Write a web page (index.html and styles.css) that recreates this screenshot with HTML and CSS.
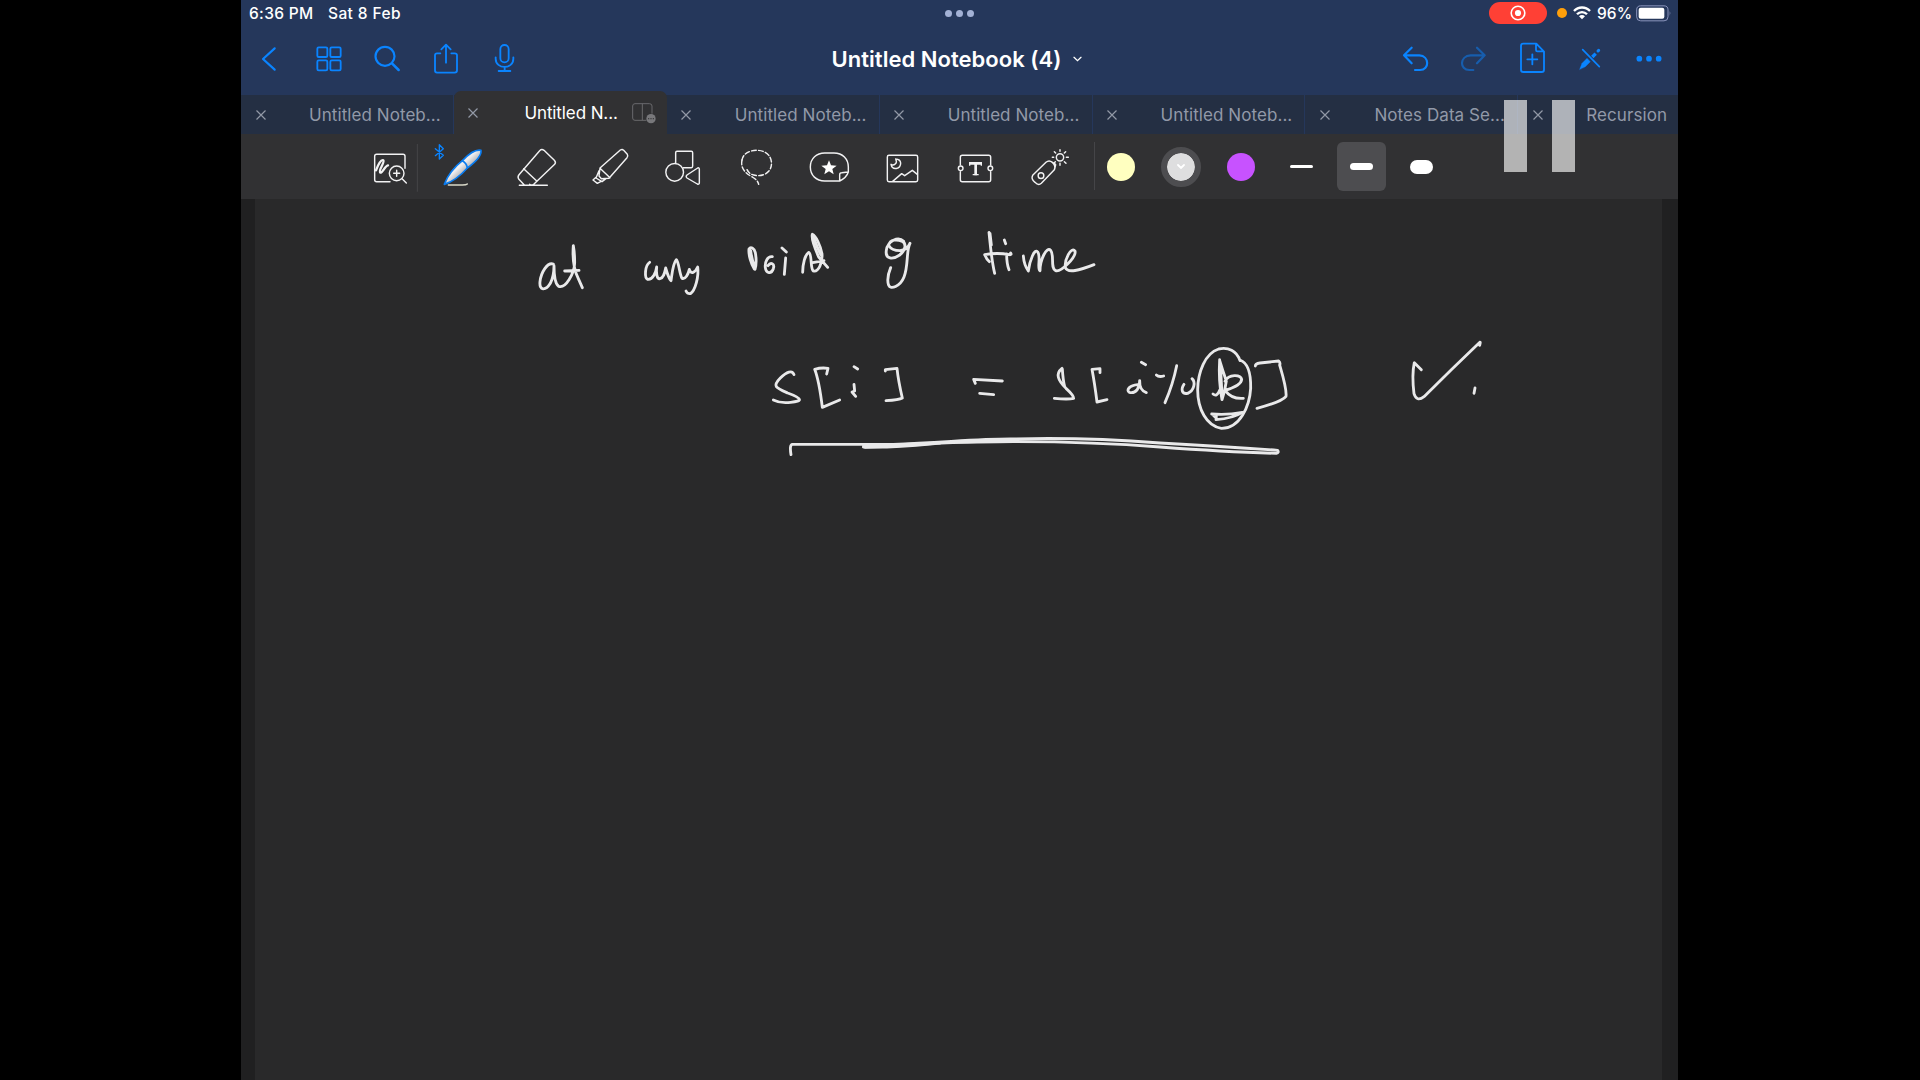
FILE: index.html
```html
<!DOCTYPE html>
<html lang="en">
<head>
<meta charset="utf-8">
<title>Untitled Notebook (4)</title>
<link rel="stylesheet" href="styles.css">
</head>
<body>
<main class="tablet">
  <header class="header">
    <div class="status">
      <span class="status-time">6:36 PM</span>
      <span class="status-date">Sat 8 Feb</span>
      <span class="status-dots"><i></i><i></i><i></i></span>
      <span class="recording">
        <svg width="16" height="16" viewBox="0 0 16 16"><circle cx="8" cy="8" r="6.8" fill="none" stroke="#fff" stroke-width="1.6"/><circle cx="8" cy="8" r="3.1" fill="#fff"/></svg>
      </span>
      <span class="mic-dot"></span>
      <svg class="wifi" width="18" height="14" viewBox="0 0 54 42"><g fill="none" stroke="#fff" stroke-width="7"><path d="M3 15C16 1 38 1 51 15"/><path d="M12 25C20 16 34 16 42 25"/></g><path d="M27 40L18 31C23 26 31 26 36 31Z" fill="#fff"/></svg>
      <span class="battery-text">96%</span>
      <svg class="battery" width="36" height="17" viewBox="0 0 108 51"><rect x="2" y="2.500" width="94" height="45" rx="12" fill="none" stroke="#8b95bd" stroke-width="3"/><rect x="8" y="8.500" width="77" height="33" rx="6" fill="#fff"/><path d="M101 18Q106 25 101 33Z" fill="#8b95bd"/></svg>
    </div>
    <nav class="nav">
      <div class="nav-group">
        <svg class="nav-icon" viewBox="18 66 174 219"><path d="M119 145L84 177L119 209"/></svg>
        <svg class="nav-icon" viewBox="192 66 174 219"><g stroke-width="5.500"><rect x="247" y="142" width="30" height="29" rx="4"/><rect x="286" y="142" width="31" height="29" rx="4"/><rect x="247" y="181" width="30" height="30" rx="4"/><rect x="286" y="181" width="31" height="30" rx="4"/></g></svg>
        <svg class="nav-icon" viewBox="366 66 174 219"><circle cx="450" cy="169" r="28.500"/><path d="M471 190L491 210" stroke-width="7.500"/></svg>
        <svg class="nav-icon" viewBox="540 66 174 219"><g stroke-width="5.500"><path d="M616 160H606Q600 160 600 166V211Q600 218 606 218H659Q666 218 666 211V166Q666 160 659 160H649M633 188V135M619 148L633 134L647 148"/></g></svg>
        <svg class="nav-icon" viewBox="714 66 174 219"><g stroke-width="5.500"><rect x="796" y="135" width="25" height="52" rx="12.500"/><path d="M782 172V176C782 209 835 209 835 176V172M809 202V212M791 213H826"/></g></svg>
      </div>
      <h1 class="title">Untitled Notebook (4)<svg width="9" height="6" viewBox="0 0 27 18"><path d="M3 4L13.500 14L24 4" fill="none" stroke="#fff" stroke-width="4" stroke-linecap="round"/></svg></h1>
      <div class="nav-group">
        <svg class="nav-icon" viewBox="564 66 174 219"><path d="M635 143L612 166L635 190M613 166H658C689 168 689 210 660 210H645"/></svg>
        <svg class="nav-icon dim" viewBox="18 66 174 219"><path d="M111 143L134 166L111 190M133 166H92C58 168 58 210 88 210H100"/></svg>
        <svg class="nav-icon" viewBox="192 66 174 219"><g stroke-width="5.500"><path d="M250 131H289L312 155V209Q312 216 305 216H250Q243 216 243 209V138Q243 131 250 131ZM288 132V150Q288 154 292 154H311M277 163V193M262 178H292"/></g></svg>
        <svg class="nav-icon" viewBox="366 66 174 219"><path d="M428 149L478 200" stroke-width="5"/><path d="M419 208L426 190L441 175L451 185L436 200Z" fill="#0a84ff" stroke-width="1"/><path d="M457 171L467 161" stroke-width="10" stroke-linecap="butt"/><path d="M474 153L476 151" stroke-width="9"/></svg>
        <svg class="nav-icon" viewBox="540 66 174 219"><g fill="#0a84ff" stroke="none"><circle cx="598" cy="176" r="8.500"/><circle cx="627" cy="176" r="8.500"/><circle cx="656" cy="176" r="8.500"/></g></svg>
      </div>
    </nav>
  </header>

  <div class="tabs">
    <div class="tab"><svg class="close" viewBox="0 0 10 10"><path d="M.5 .5L9.500 9.500M9.500 .5L.5 9.500"/></svg><span>Untitled Noteb...</span></div>
    <div class="tab active"><svg class="close" viewBox="0 0 10 10"><path d="M.5 .5L9.500 9.500M9.500 .5L.5 9.500"/></svg><span>Untitled N...</span>
      <svg class="split" width="24" height="21" viewBox="0 0 72 63"><g fill="none" stroke="#69696c" stroke-width="3"><path d="M43 52H9Q2 52 2 45V9Q2 2 9 2H52Q60 2 60 9V32M31 2V52"/></g><circle cx="57" cy="47" r="14" fill="#78787b"/><g fill="#313133"><circle cx="50" cy="47" r="2"/><circle cx="57" cy="47" r="2"/><circle cx="64" cy="47" r="2"/></g></svg></div>
    <div class="tab"><svg class="close" viewBox="0 0 10 10"><path d="M.5 .5L9.500 9.500M9.500 .5L.5 9.500"/></svg><span>Untitled Noteb...</span></div>
    <div class="tab"><svg class="close" viewBox="0 0 10 10"><path d="M.5 .5L9.500 9.500M9.500 .5L.5 9.500"/></svg><span>Untitled Noteb...</span></div>
    <div class="tab"><svg class="close" viewBox="0 0 10 10"><path d="M.5 .5L9.500 9.500M9.500 .5L.5 9.500"/></svg><span>Untitled Noteb...</span></div>
    <div class="tab"><svg class="close" viewBox="0 0 10 10"><path d="M.5 .5L9.500 9.500M9.500 .5L.5 9.500"/></svg><span class="wide">Notes Data Se...</span></div>
    <div class="tab last"><svg class="close" viewBox="0 0 10 10"><path d="M.5 .5L9.500 9.500M9.500 .5L.5 9.500"/></svg><span>Recursion</span></div>
  </div>

  <div class="toolbar">
    <div class="tools">
      <svg class="tool" viewBox="354 402 219 195"><path d="M547 433V574" stroke="#454548" stroke-width="3"/><path d="M465 545H425Q419 545 419 539V469Q419 463 425 463H504Q510 463 510 469V505"/><path d="M423 511C430 492 438 478 445 481C451 485 428 514 436 518C443 519 449 498 459 496" stroke-width="7"/><circle cx="485" cy="520" r="22"/><path d="M485 511V529M476 520H494M502 537L514 549"/></svg>
      <svg class="tool" viewBox="573 402 219 195"><defs><linearGradient id="pen" x1="0" y1="0" x2="1" y2="1"><stop offset=".45" stop-color="#eeeef0"/><stop offset=".65" stop-color="#9b9b9f"/></linearGradient></defs><path d="M601 446L625 466L613 477V434L625 446L601 467" stroke="#0a84ff" stroke-width="4"/><path d="M640 555H682Q694 555 697 552" stroke="#d8d8c8"/><path d="M628 553C637 528 655 503 683 481C704 459 725 448 738 451C740 464 724 484 697 504C676 528 653 545 628 553Z" fill="url(#pen)" stroke="#0a7cf0" stroke-width="5"/><path d="M682 482Q695 489 697 503" stroke="#0a7cf0" stroke-width="5"/></svg>
      <svg class="tool" viewBox="792 402 219 195"><path d="M853 556H937M868 555L851 537Q847 530 852 524L914 452Q920 446 927 451L958 481Q964 487 959 493L897 552Q890 558 884 553M866 506L906 544"/></svg>
      <svg class="tool" viewBox="-54 402 219 195"><path d="M30 504L91 450Q97 446 101 451L112 463Q115 468 111 473L57 535L34 536L27 528ZM30 505L60 533M27 512L18 534L36 545L48 536M18 532L9 540L22 550L32 545"/></svg>
      <svg class="tool" viewBox="165 402 219 195"><path d="M257 489V458Q257 454 261 454H304Q308 454 308 458V498Q308 503 304 503H280"/><circle cx="254" cy="517" r="26.500"/><path d="M291 525L323 504Q328 502 328 508V548Q328 554 322 552L291 534Q286 530 291 525Z"/></svg>
      <svg class="tool" viewBox="384 402 219 195"><path d="M456 480C460 444 537 437 544 484C549 521 512 532 491 525Q474 521 470 505" stroke-dasharray="14 7"/><path d="M456 480C451 504 465 519 487 531Q504 541 506 553" stroke-dasharray="14 7"/></svg>
      <svg class="tool" viewBox="603 402 219 195"><path d="M749 543H704C679 543 661 526 661 501C661 475 680 459 704 459H732C758 459 775 477 775 501V516C771 529 761 537 749 543V524Q749 518 755 518L774 516"/><path d="M717 481L723 496L740 497L727 507L731 523L717 514L703 523L707 507L694 497L711 496Z" fill="#fff" stroke="none"/></svg>
      <svg class="tool" viewBox="822 402 219 195"><rect x="892" y="466" width="91" height="79" rx="5"/><path d="M908 544L935 521L944 527L967 511L982 523"/><path d="M917 477C924 490 911 499 903 493C907 512 932 508 932 489Q931 478 917 477"/></svg>
      <svg class="tool" viewBox="111 402 219 195"><path d="M181 495V472Q181 466 187 466H266Q272 466 272 472V495M181 515V539Q181 545 187 545H266Q272 545 272 539V515"/><circle cx="182" cy="505" r="7"/><circle cx="271" cy="505" r="7"/><path d="M207 490H246M227 490V526" stroke-width="8" stroke-linecap="butt"/><path d="M209 488V497M244 488V497M218 524H236" stroke-width="4" stroke-linecap="butt"/></svg>
      <svg class="tool" viewBox="330 402 219 195"><path d="M398 526L438 487Q447 479 457 487Q468 496 463 509L424 550Q415 558 405 547Q392 537 398 526ZM456 486L466 492M464 507L467 494"/><circle cx="423" cy="527" r="8.500"/><circle cx="480" cy="472" r="11"/><path d="M480 449V454M480 490V496M457 472H461M499 472H505M463 455L467 459M497 455L493 459M463 488L466 485M493 485L498 490"/></svg>
    </div>
    <div class="colors">
      <span class="swatch yellow"></span>
      <span class="swatch white"><svg width="8" height="6" viewBox="0 0 8 6"><path d="M1 1L4 4L7 1" fill="none" stroke="#fff" stroke-width="1.800" stroke-linecap="round"/></svg></span>
      <span class="swatch purple"></span>
    </div>
    <div class="widths">
      <span class="width"><i class="thin"></i></span>
      <span class="width selected"><i class="medium"></i></span>
      <span class="width"><i class="thick"></i></span>
    </div>
  </div>

  <section class="canvas">
    <div class="paper">
      <svg class="ink" width="1407" height="881" viewBox="255 199 1407 881">
        <g transform="translate(520 220) scale(.33333)">
          <path d="M100 132C82 126 63 157 60 185C57 213 77 213 91 190C99 174 102 155 102 137C102 160 104 190 116 199C137 207 163 160 164 129C164 105 162 88 160 77C157 115 162 150 175 176L187 203M134 153L177 151"/>
          <path d="M389 127C374 137 373 174 383 178C398 180 408 158 410 141C408 157 410 178 420 176C432 173 434 158 437 144C441 158 447 177 453 182C456 164 458 132 469 119C476 124 479 164 486 175C497 179 505 161 508 148C513 165 525 158 533 141C537 168 526 212 511 221Q502 222 498 213"/>
          <path d="M703 147C693 131 685 104 687 87C692 79 702 83 706 98C709 115 709 135 705 148M692 92Q695 118 704 140M757 110C743 108 734 125 736 143C738 161 754 163 760 146C765 130 752 126 744 137M786 84L799 96M797 114L793 163"/>
          <path d="M848 157C848 132 855 104 866 97C877 100 870 146 880 153C895 157 908 130 906 101C901 76 888 48 877 43C873 58 885 86 896 111L923 142M878 128L912 122"/>
          <path d="M880 48Q891 83 903 105"/>
        </g>
        <g transform="translate(820 220) scale(.33333)">
          <path d="M251 64C235 48 203 62 199 91C195 119 219 119 239 105C255 93 261 72 247 64C230 57 210 58 206 76Q215 92 240 92Q262 89 270 70C258 93 266 135 252 171C241 199 211 210 206 196C200 179 207 155 212 143"/>
          <path d="M507 37C511 73 514 119 524 160M494 104Q532 97 568 104Q576 105 572 99M495 106Q500 119 508 125M510 40L514 75M553 60L557 71M560 102Q560 132 567 149"/>
          <path d="M610 108Q612 135 625 153C629 122 644 83 653 96C664 110 650 147 660 152C660 120 680 77 692 91C704 106 690 144 707 152C722 158 770 111 765 93C754 78 733 119 736 142C742 161 779 151 822 134"/>
        </g>
        <g transform="translate(750 320) scale(.33333)">
          <path d="M132 164C127 149 110 155 91 174C66 199 77 203 113 219C158 235 159 244 122 247Q92 251 70 240"/>
          <path d="M230 162L234 145Q214 142 194 148Q207 181 217 262L269 240M312 140L323 147M312 193L314 213L306 216L317 229M406 153V149L441 145Q445 183 457 234Q447 240 408 242"/>
          <path d="M676 190L671 178L757 183M689 220L731 224"/>
          <path d="M123 404Q118 374 127 373H430C590 367 690 356 790 357C930 353 1100 359 1230 369Q1430 380 1583 391Q1588 398 1579 400Q1430 396 1230 381C1080 369 930 365 790 365C700 366 620 366 560 370C500 376 430 384 340 381"/>
          <path d="M345 382Q450 377 570 369L370 377Z" fill="#e9e9ea"/>
        </g>
        <g transform="translate(1030 320) scale(.33333)">
          <path d="M96 145C76 161 83 180 108 205Q132 227 131 235Q115 239 73 235M97 147Q99 180 104 200M210 158V146L186 148Q194 191 201 246L231 239"/>
          <path d="M334 127L347 134M323 194C299 196 287 210 298 217C318 222 330 203 329 182Q328 211 349 218M379 165Q386 172 401 168M440 137Q429 192 405 248M462 193C451 210 457 223 473 220C492 212 498 187 486 176"/>
          <path d="M630 122C620 91 594 81 566 87C525 100 504 156 503 209C503 268 530 318 574 325C629 326 659 259 662 205C663 160 652 128 630 120"/>
          <path d="M569 119Q565 182 576 239Q585 213 589 183Q577 148 569 121M571 130L576 225M549 222Q561 232 569 211M585 184C597 161 632 164 635 178C634 195 609 204 585 211Q605 238 640 235M545 282Q593 286 637 277Q609 295 558 299L559 289M547 283L562 298"/>
          <path d="M676 138Q676 131 690 129L746 123Q752 129 749 135C758 166 771 208 768 229Q756 245 681 265"/>
        </g>
        <g transform="translate(1380 320) scale(.33333)">
          <path d="M124 149L103 128Q95 164 102 221Q110 247 132 230Q216 146 298 68Q303 63 299 76M285 204L282 220"/>
        </g>
      </svg>
    </div>
  </section>
  <div class="pause"><i></i><i></i></div>
</main>
</body>
</html>
```
FILE: styles.css
```css
* { box-sizing: border-box; }

body {
  margin: 0;
  height: 1080px;
  overflow: hidden;
  background: #000;
  color: #fff;
  font-family: Inter, "Liberation Sans", sans-serif;
}

svg { display: block; flex: none; }

.tablet {
  position: relative;
  display: flex;
  flex-direction: column;
  width: 1437px;
  height: 1080px;
  margin-left: 241px;
  overflow: hidden;
  background: #29292a;
}

.header { height: 95px; background: #25375b; }

.status {
  position: relative;
  display: flex;
  align-items: center;
  height: 26px;
  margin-bottom: -4px;
  padding: 0 6px 0 8px;
  font-size: 15.5px;
  font-weight: 500;
  white-space: nowrap;
}
.status-time { width: 79px; letter-spacing: .35px; }
.status-date { letter-spacing: .4px; }

.status-dots {
  position: absolute;
  left: 704px;
  top: 10px;
  display: flex;
  gap: 4px;
}
.status-dots i { width: 7px; height: 7px; border-radius: 50%; background: #a3b1d5; }

.recording {
  display: flex;
  align-items: center;
  justify-content: center;
  width: 58px;
  height: 22px;
  margin-left: auto;
  border-radius: 11px;
  background: #ff4035;
}
.mic-dot { width: 10px; height: 10px; margin: 0 6px 0 10px; border-radius: 50%; background: #ff9f0a; }
.battery-text { width: 35px; margin: 0 4px 0 6px; letter-spacing: .1px; }

.nav { display: flex; justify-content: space-between; height: 73px; }
.nav-group { display: flex; }
.nav-icon {
  width: 58px;
  height: 73px;
  fill: none;
  stroke: #0a84ff;
  stroke-width: 6.5;
  stroke-linecap: round;
  stroke-linejoin: round;
}
.dim { opacity: .5; }

.title {
  display: flex;
  align-items: center;
  gap: 12px;
  margin: 0;
  padding-right: 5px;
  height: 73px;
  font-size: 22px;
  font-weight: 600;
  letter-spacing: .03px;
  white-space: nowrap;
}

.tabs { display: flex; height: 39px; background: #242f43; }
.tab {
  display: flex;
  align-items: center;
  flex: none;
  width: 212.9px;
  padding-left: 14.5px;
  border-right: 1px solid #25375b;
  color: #9299a8;
  font-size: 17px;
  letter-spacing: .07px;
  white-space: nowrap;
}
.tab span { margin-left: 43.5px; }
.tab span.wide { margin-left: 44.5px; }
.tab.last { width: 160px; border-right: 0; }
.tab.last span { margin-left: 43.5px; }
.close { width: 10px; height: 10px; overflow: visible; fill: none; stroke: #9299a6; stroke-width: 1.2; }
.tab.active {
  height: 43px;
  margin-top: -4px;
  padding-top: 1px;
  border: 0;
  border-radius: 7px 7px 0 0;
  background: #313133;
  color: #fff;
}
.tab.active span { width: 94px; margin-left: 46px; letter-spacing: -.1px; }
.split { margin-left: 14px; }

.toolbar {
  display: flex;
  height: 65px;
  padding-left: 112px;
  background: #313133;
}
.tools { display: flex; width: 742px; border-right: 1px solid #454548; height: 48px; margin-top: 8px; }
.tool {
  width: 73px;
  height: 65px;
  margin-top: -8px;
  fill: none;
  stroke: #f2f2f3;
  stroke-width: 4.3;
  stroke-linecap: round;
  stroke-linejoin: round;
}

.colors { display: flex; align-items: center; gap: 20.2px; padding-left: 6px; }
.swatch {
  display: flex;
  align-items: center;
  justify-content: center;
  width: 40px;
  height: 40px;
  border: 6.5px solid transparent;
  border-radius: 50%;
  background-clip: padding-box;
}
.yellow { background-color: #ffffc0; }
.white { border-color: #4d4d50; background-color: #dededf; }
.purple { background-color: #c752ff; }

.widths { display: flex; align-items: center; gap: 11px; margin-left: 16px; }
.width {
  display: flex;
  align-items: center;
  justify-content: center;
  width: 49px;
  height: 49px;
  border-radius: 6px;
}
.selected { background: #4d4d50; }
.width i { width: 23px; border-radius: 8px; background: #fff; }
.width .thin { height: 2.500px; }
.width .medium { height: 7px; }
.width .thick { height: 14px; }

.canvas { flex: 1; padding: 0 16px 0 14px; background: #202021; }
.paper { height: 881px; background: #29292a; }
.ink {
  fill: none;
  stroke: #e9e9ea;
  stroke-width: 8.5;
  stroke-linecap: round;
  stroke-linejoin: round;
}

.pause { position: absolute; left: 1263px; top: 100px; display: flex; gap: 25px; }
.pause i { width: 23px; height: 72px; background: rgba(255, 255, 255, .63); }
```
